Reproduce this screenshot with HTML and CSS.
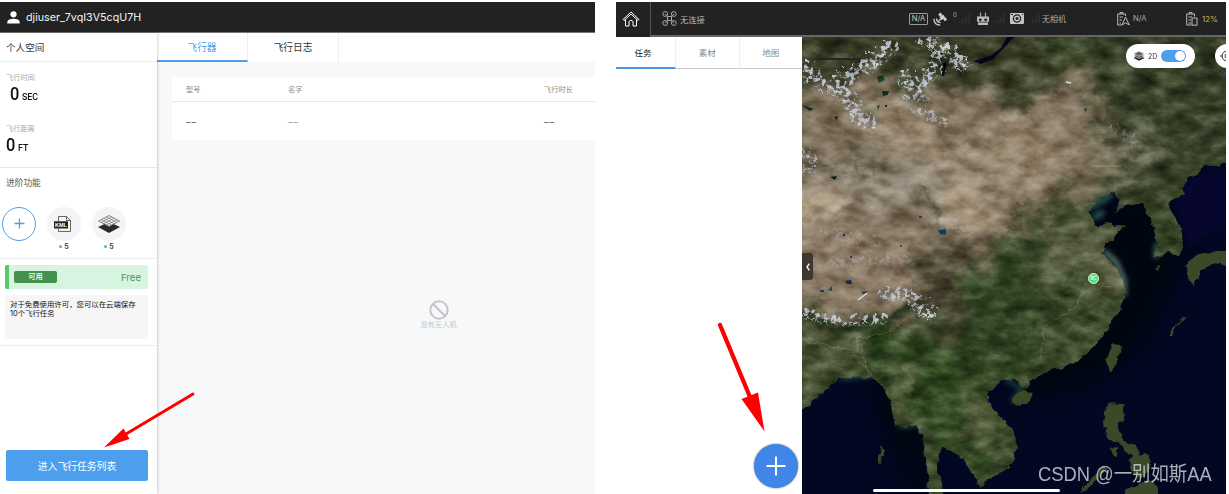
FILE: index.html
```html
<!DOCTYPE html>
<html lang="zh">
<head>
  <meta charset="utf-8">
  <title>Ground Station</title>
  <link rel="stylesheet" href="styles.css">
</head>
<body>
<div class="screens">

  <!-- user page -->
  <div class="screen user">
    <div class="userbar">
      <svg width="13" height="13" viewBox="0 0 13 13"><circle cx="6.5" cy="3.3" r="3.1" fill="#fff"/><path d="M.3 12.5V10.800Q1 7.700 6.500 7.700T12.700 10.800V12.500Z" fill="#fff"/></svg>
      <span class="username">djiuser_7vqI3V5cqU7H</span>
    </div>
    <div class="userbody">
      <div class="side">
        <div class="sidetitle">个人空间</div>
        <div class="stats">
          <div class="label">飞行时间</div>
          <div class="value indent"><b>0</b><i>SEC</i></div>
          <div class="label second">飞行距离</div>
          <div class="value"><b>0</b><i>FT</i></div>
        </div>
        <div class="features">
          <div class="ftitle">进阶功能</div>
          <div class="icons">
            <div class="feature">
              <div class="round add"><svg width="11" height="11" viewBox="0 0 11 11"><path d="M5.500 .5V10.500M.5 5.500H10.500" stroke="#4d9fee" stroke-width="1.300"/></svg></div>
            </div>
            <div class="feature">
              <div class="round">
                <svg class="kmlicon" width="18" height="18" viewBox="0 0 18 18"><path d="M4.500 6V1.500H12.500L16.500 5.500V16.500H4.500V13.500M12.500 1.500V5.500H16.500" fill="none" stroke="#444" stroke-width=".8"/><rect x="0" y="6.300" width="14" height="7.200" fill="#222"/><text x="1" y="12" class="kml" textLength="12" lengthAdjust="spacingAndGlyphs">KML</text></svg>
              </div>
              <div class="count"><span class="dot"></span>5</div>
            </div>
            <div class="feature">
              <div class="round">
                <svg width="24" height="20" viewBox="0 0 24 20"><path d="M1 13L12 8L23 13L12 19Z" fill="#2b2b2b"/><path d="M1.500 7L12 1.500L22.500 7L12 12.500Z" fill="#f5f5f5" stroke="#555" stroke-width=".7"/><path d="M4.100 8.400L14.600 2.900M6.700 9.700L17.200 4.200M9.400 11.100L19.900 5.600M4.100 5.600L14.600 11.100M6.700 4.200L17.200 9.700M9.400 2.900L19.900 8.400" stroke="#666" stroke-width=".6"/></svg>
              </div>
              <div class="count"><span class="dot"></span>5</div>
            </div>
          </div>
        </div>
        <div class="license">
          <div class="plan"><span class="tag">可用</span><span class="free">Free</span></div>
          <div class="note">对于免费使用许可，您可以在云端保存10个飞行任务</div>
        </div>
        <button class="enter" type="button">进入飞行任务列表</button>
      </div>
      <div class="main">
        <div class="tabs"><div class="tab on">飞行器</div><div class="tab">飞行日志</div></div>
        <div class="table">
          <div class="row head"><span>型号</span><span>名字</span><span>飞行时长</span></div>
          <div class="row"><span class="none">––</span><span class="none dim">––</span><span class="none">––</span></div>
        </div>
        <div class="empty">
          <svg width="20" height="20" viewBox="0 0 20 20"><circle cx="10" cy="10" r="8.700" fill="none" stroke="#c4c5c7" stroke-width="2"/><path d="M4 4L16 16" stroke="#c4c5c7" stroke-width="2"/></svg>
          <span>没有无人机</span>
        </div>
      </div>
    </div>
  </div>

  <!-- mission page -->
  <div class="screen mission">
    <div class="bar">
      <div class="home"><svg width="18" height="16" viewBox="0 0 18 16"><path d="M1 8.500L9 1L17 8.500L16 9.500L9 3.100L2 9.500ZM3.500 8.500V15H7V10.500Q9 8 11 10.500V15H14.500V8.500" fill="none" stroke="#fff" stroke-width="1"/></svg></div>
      <div class="status">
        <svg class="drone" width="15" height="15" viewBox="0 0 15 15" fill="none" stroke="#aaa"><circle cx="3.200" cy="3" r="2.400"/><circle cx="11.800" cy="3" r="2.400"/><circle cx="3.200" cy="12" r="2.400"/><circle cx="11.800" cy="12" r="2.400"/><path d="M3.200 3L5.500 5.500H9.500L11.800 3M3.200 12L5.500 9.500H9.500L11.800 12M5.500 5.500V9.500M9.500 5.500V9.500"/></svg>
        <span class="link">无连接</span>
        <span class="mode">N/A</span>
        <!-- satellite with its dish waves -->
        <svg class="sat" width="14" height="14" viewBox="0 0 14 14"><path d="M5.200 2.300L7.700 .6L9.300 3L6.900 4.700ZM10.200 7L12.500 5.200L14 7.700L11.700 9.300Z" fill="#d0d0d0"/><path d="M6.500 5.200L10 2.600L12.200 5.600L8.700 8.200Z" fill="#d0d0d0"/><path d="M5.600 8.800L7.600 7M3.600 6.500Q3.400 10.300 7.600 10.600M1 6.800Q.8 13 7.300 13.100" stroke="#d0d0d0" stroke-width="1.300" fill="none"/></svg>
        <span class="sats">0</span>
        <svg class="sig" width="11" height="9" viewBox="0 0 11 9"><path d="M1 9V7M4 9V5M7 9V3M10 9V0" stroke="#363636"/></svg>
        <svg class="rc" width="12" height="14" viewBox="0 0 12 14"><path d="M3.500 5V.5M8.500 5V.5" stroke="#aaa" stroke-width="1.200"/><path d="M0 4.500H12V9.800H0ZM1 10.500H11V13H1Z" fill="#bbb"/><circle cx="3.300" cy="7.800" r="1.400" fill="#222"/><circle cx="8.700" cy="7.800" r="1.400" fill="#222"/></svg>
        <svg class="sig s2" width="11" height="9" viewBox="0 0 11 9"><path d="M1 9V7M4 9V5M7 9V3M10 9V0" stroke="#363636"/></svg>
        <svg class="cam" width="14" height="11" viewBox="0 0 14 11"><rect width="14" height="11" rx="1" fill="#c4c4c4"/><circle cx="7" cy="5.500" r="3.600" fill="none" stroke="#222" stroke-width="1.300"/><circle cx="7" cy="5.500" r="1.500" fill="#222"/><path d="M1 1.500H3M12 1.500H13" stroke="#222"/></svg>
        <svg class="sig s3" width="11" height="9" viewBox="0 0 11 9"><path d="M1 9V7M4 9V5M7 9V3M10 9V0" stroke="#363636"/></svg>
        <span class="nocam">无相机</span>
        <svg class="bat" width="13" height="14" viewBox="0 0 13 14" fill="none" stroke="#bbb"><path d="M5 13H.7V2H8.500V4M3 2V.6H6V2M2.500 5H6M2.500 8H5M2.500 11H4"/><path d="M8.500 5L12.300 13L8.500 10.800L5 13Z"/></svg>
        <span class="na">N/A</span>
        <svg class="bat b2" width="12" height="14" viewBox="0 0 12 14" fill="none" stroke="#bbb"><path d="M5.500 13H.7V2H8.500V4.500M3 2V.6H6V2M2.500 5H6M2.500 8H5M2.500 11H5M6 6H11V13.200H6Z"/></svg>
        <span class="pct">12%</span>
      </div>
    </div>
    <div class="missionbody">
      <div class="list">
        <div class="ltabs"><div class="ltab on">任务</div><div class="ltab">素材</div><div class="ltab">地图</div></div>
        <button class="plus" type="button"><svg width="20" height="20" viewBox="0 0 20 20"><path d="M10 .5V19.500M.5 10H19.500" stroke="#fff" stroke-width="2"/></svg></button>
      </div>
      <div class="map">
        <svg class="earth" width="424" height="457" viewBox="802 37 424 457" color-interpolation-filters="sRGB">
          <defs>
            <clipPath id="land"><path d="M802 30H1230V163L1216 166L1203 165L1197 174L1187 180L1183 193L1167 203L1175 217L1182 233L1183 247L1178 256L1168 252L1153 258L1157 243L1153 227L1148 213L1145 203L1130 203L1115 212L1120 200L1113 190L1103 198L1088 211L1098 227L1107 223L1125 227L1113 238L1100 252L1113 263L1123 280L1125 293L1120 308L1107 330L1093 347L1077 362L1053 370L1030 380L1029 389L1023 388L1015 378L1000 382L988 393V402L1000 417L1012 430L1017 447L1013 463L997 475L980 487L975 477L963 460L950 450L943 447L938 453L937 470L942 483L943 498H928L927 467L923 440L917 425L895 427L890 400L880 385L872 377L840 378L820 395L798 414V30Z"/></clipPath>
            <filter id="soft" x="-50%" y="-50%" width="200%" height="200%"><feGaussianBlur stdDeviation="10"/></filter>
            <filter id="soft2" x="-50%" y="-50%" width="200%" height="200%"><feGaussianBlur stdDeviation="2.500"/></filter>
            <filter id="rough" filterUnits="userSpaceOnUse" x="790" y="25" width="450" height="480"><feTurbulence type="fractalNoise" baseFrequency=".12" numOctaves="4" seed="3"/><feDisplacementMap in="SourceGraphic" scale="7" xChannelSelector="R" yChannelSelector="G"/></filter>
            <filter id="warp" filterUnits="userSpaceOnUse" x="760" y="0" width="500" height="530"><feTurbulence type="fractalNoise" baseFrequency=".03" numOctaves="5" seed="12"/><feDisplacementMap in="SourceGraphic" scale="60" xChannelSelector="R" yChannelSelector="G"/></filter>
            <filter id="grain" x="0" y="0" width="100%" height="100%"><feTurbulence type="fractalNoise" baseFrequency=".045 .08" numOctaves="6" seed="21"/><feColorMatrix values=".95 0 0 0 .03  .95 0 0 0 .03  .95 0 0 0 .03  0 0 0 0 1"/></filter>
            <filter id="snow" filterUnits="userSpaceOnUse" x="790" y="25" width="450" height="480"><feTurbulence type="fractalNoise" baseFrequency=".22" numOctaves="4" seed="5" result="n"/><feColorMatrix in="n" values="0 0 0 0 1  0 0 0 0 1  0 0 0 0 1  0 6 0 0 -2.700" result="m"/><feDisplacementMap in="SourceGraphic" in2="n" scale="20" xChannelSelector="R" yChannelSelector="G" result="d"/><feComposite in="d" in2="m" operator="in"/></filter>
          </defs>
          <rect x="802" y="37" width="424" height="457" fill="#020722"/>
          <g filter="url(#soft)" fill="#000610">
            <path d="M1090 205L1150 195L1190 250L1165 300L1140 350L1090 385L1020 400L1000 390L1110 320Z"/>
            <path d="M865 378L885 375L930 430V494H915L890 440Z"/>
          </g>
          <path d="M1187 180L1226 165V225L1190 245L1175 205Z" fill="#07072e" filter="url(#soft2)"/>
          <g filter="url(#soft2)" fill="none" stroke="#23534f" stroke-width="6">
            <path d="M1088 208L1105 199L1112 193M1093 218L1104 212M1155 258L1158 242"/>
            <path d="M1104 251L1116 262L1124 280V296" stroke="#52776a" stroke-width="5"/>
            <path d="M840 379L872 376M898 427L917 425M1005 380L1022 388L1011 402M938 480V494" stroke-width="3"/>
          </g>
          <g filter="url(#rough)">
            <g clip-path="url(#land)">
              <rect x="798" y="30" width="435" height="470" fill="#3b4729"/>
              <g filter="url(#warp)">
              <g filter="url(#soft)">
                <path d="M770 100L850 70L930 85L1000 85L1060 65L1110 90L1120 150L1080 185L1020 235L975 270L960 310L920 325L770 310Z" fill="#7a6d58"/>
                <path d="M850 105L920 100L960 140L1070 110L1070 165L1010 190L930 175L850 130Z" fill="#93836c"/>
                <path d="M770 180L870 165L970 170L1010 210L960 225L900 200L770 230Z" fill="#94897a"/>
                <path d="M770 190L860 190L840 220L770 240Z" fill="#b5a68d"/>
                <path d="M940 185L970 188L990 215L978 228Z" fill="#b09a7b"/>
                <path d="M770 240L880 220L930 250L950 290L925 310L850 312L770 300Z" fill="#8a7964"/>
                <path d="M770 10H870L1060 10L1040 70L970 90L910 72L830 85L770 80Z" fill="#373b24"/>
                <path d="M1060 10H1250V160L1190 190L1130 200L1110 150L1105 80Z" fill="#363f27"/>
                <path d="M985 105L1045 75L1060 80L1020 108Z" fill="#2b341c"/>
                <path d="M1110 155L1140 120L1155 140L1120 180L1090 190Z" fill="#7f7a64"/>
                <path d="M975 260L1040 240L1080 260L1110 280L1115 305L1050 365L1000 385L945 360L950 290Z" fill="#304322"/>
                <path d="M1025 235L1090 220L1135 260L1135 295L1070 295L1040 265Z" fill="#5b6043"/>
                <path d="M1035 330L1080 310L1090 350L1040 375Z" fill="#3f4e2d"/>
                <path d="M925 250L960 260L960 340L930 330L910 295Z" fill="#474230"/>
                <path d="M770 315L850 325L870 370L830 378L770 415Z" fill="#4b5536"/>
                <path d="M870 320L960 350L1000 410L980 480L935 450L920 425L890 410L865 360Z" fill="#2b451e"/>
                <path d="M945 400L990 400L993 435L955 445Z" fill="#5f6544"/>
                <path d="M893 360L910 362L908 420L896 420Z" fill="#827f60"/>
              </g>
              <g filter="url(#soft2)" fill="none">
                <path d="M790 152L835 163L885 168M920 200L960 225L980 255M790 78L850 88" stroke="#3d3a29" stroke-width="4" opacity=".6"/>
                <path d="M790 232L850 212L885 195L925 205" stroke="#6b5d47" stroke-width="3" opacity=".7"/>
                <path d="M1010 240L1030 210M1040 255L1060 200M1110 90L1090 155M1075 60L1010 90M980 300L1010 350M1060 290L1030 340M915 345L925 410" stroke="#263018" stroke-width="5" opacity=".5"/>
                <path d="M840 120L900 140L985 155M860 105L960 140M960 150L1030 120L1070 75M985 180L1070 150M1010 210L1040 190" stroke="#b09f87" stroke-width="2.500" opacity=".6"/>
              </g>
              </g>
              <path d="M798 317L840 329L880 326L912 305" stroke="#22331a" stroke-width="8" fill="none" filter="url(#soft2)"/>
              <path d="M872 375L850 350L802 340M858 352L857 337L885 334L905 320M1125 293L1090 280L1075 308L1045 325L1040 360M1013 170L985 200L990 230M860 345L870 380" fill="none" stroke="#918a6d" stroke-width="1" opacity=".5"/>
            </g>
            <g fill="#3a4a28">
              <path d="M1114 344L1120 345L1117 360L1111 373L1106 360Z"/>
              <path d="M1014 396L1024 390L1031 393L1028 402L1019 406L1012 402Z"/>
              <path d="M1108 403L1122 404L1125 415L1118 425L1122 440L1138 447L1140 460L1128 454L1117 442L1106 437L1104 422Z"/>
              <path d="M1110 446L1117 448L1117 457L1113 456ZM1128 458L1148 454L1151 464L1145 475L1138 480L1133 470ZM1125 488L1150 480L1158 490V498H1125Z"/>
              <path d="M1103 465L1107 469L1085 491L1080 493L1088 482Z"/>
              <path d="M1230 250L1198 255L1184 266L1190 280L1194 288L1202 270L1212 264L1230 266Z"/>
              <path d="M1187 315L1184 316L1169 334L1171 335ZM1154 267L1161 266L1157 269ZM882 445L884 449L880 466L878 463Z"/>
            </g>
          </g>
          <g filter="url(#snow)" fill="none" stroke="#b9bfca" stroke-linecap="round">
            <path d="M806 72L815 80M825 88L845 92L852 112L868 126M838 83L870 65L892 48M925 40L945 52L938 68L929 76M940 55L962 66M905 82L920 88" stroke-width="15"/>
            <path d="M908 98L928 99M920 113L945 124M804 155L815 162M802 170L808 172" stroke-width="9" opacity=".8"/>
            <path d="M800 314L840 323L882 321" stroke-width="9"/>
            <path d="M888 295L908 297L930 315" stroke-width="14"/>
            <path d="M820 235L880 244M830 265L910 262M940 220L960 230M1118 132L1135 145" stroke-width="9" opacity=".3"/>
          </g>
          <g fill="#04081f">
            <path d="M1007 37L1001 48L990 56L973 61L981 64L993 59L1004 48L1014 37ZM943 63L947 62L944 76L942 76Z"/>
            <path d="M877 77L883 75L885 80L879 83ZM882 91L889 91L888 95L883 96ZM877 106L880 105L878 110ZM885 105H887V107H885ZM834 117L838 116L837 121ZM802 105L814 109L810 111ZM830 177L837 176L835 180ZM1084 109L1087 108L1086 112Z" fill="#123529"/>
            <path d="M938 230L946 229L946 235L940 234ZM845 281L851 280L852 284L847 284ZM861 292L868 291L864 295ZM919 216H922V218H919ZM820 290H824V292H820ZM828 290L832 286V291ZM843 234H845V236H843ZM900 245H902V247H900ZM850 256H852V258H850Z" fill="#123e68"/>
            <path d="M1081 99L1087 92L1086 97L1082 100Z" fill="#6d8977"/>
          </g>
          <path d="M858 300L867 293M1066 82L1071 83" stroke="#dadad5" stroke-width="1.500"/>
          <path d="M1092 166L1121 166" stroke="#a89c85" opacity=".7"/>
          <g clip-path="url(#land)" class="texture"><rect x="802" y="37" width="424" height="457" filter="url(#grain)"/></g>
        </svg>
        <div class="scale">0</div>
        <div class="switch">
          <svg width="12" height="10" viewBox="0 0 12 10"><path d="M6 4.500L11.500 7L6 9.700L.5 7Z" fill="#222"/><path d="M6 2.300L11.500 4.900L6 7.500L.5 4.900Z" fill="#555" stroke="#fff" stroke-width=".5"/><path d="M6 .2L11.500 2.800L6 5.400L.5 2.800Z" fill="#666" stroke="#fff" stroke-width=".5"/></svg>
          <span>2D</span><div class="toggle"></div>
        </div>
        <div class="locate"><svg width="14" height="14" viewBox="0 0 14 14" fill="none" stroke="#333"><circle cx="7" cy="7" r="5"/><circle cx="7" cy="7" r="2"/><path d="M7 0V3M7 11V14M0 7H3M11 7H14"/></svg></div>
        <div class="fold"><svg width="4" height="8" viewBox="0 0 4 8"><path d="M3.300 .7L1 4L3.300 7.300" fill="none" stroke="#fff" stroke-width="1.400"/></svg></div>
        <div class="pin">RC</div>
        <div class="watermark">CSDN @一别如斯AA</div>
      </div>
    </div>
    <div class="homeline"></div>
  </div>
</div>

<svg class="arrows" width="1229" height="494" viewBox="0 0 1229 494">
  <path d="M193 394L126 434" stroke="#f00" stroke-width="3" stroke-linecap="round"/>
  <path d="M720 325L750 397" stroke="#f00" stroke-width="4.300" stroke-linecap="round"/>
  <path d="M104 447.500L123.500 428.500L129.500 439ZM764.500 431.500L741.500 399L758 392.500Z" fill="#f00"/>
</svg>
</body>
</html>
```
FILE: styles.css
```css
* { box-sizing: border-box; }
body {
  margin: 0;
  width: 1229px;
  height: 494px;
  overflow: hidden;
  position: relative;
  background: #fff;
  font-family: Inter, "Noto Sans CJK SC", sans-serif;
  color: #333;
}
svg { display: block; flex: none; }
button { border: none; padding: 0; cursor: pointer; font-family: inherit; }
.screens { display: flex; gap: 21px; padding-top: 2px; height: 494px; }
.screen { display: flex; flex-direction: column; overflow: hidden; position: relative; }
.user { width: 595px; }
.mission { width: 610px; }

/* user page */
.userbar {
  height: 31px;
  flex: none;
  display: flex;
  align-items: center;
  gap: 6px;
  padding-left: 7px;
  background: #222;
  border-bottom: 1px solid #777;
}
.username { color: #f4f4f4; font-size: 10.7px; white-space: nowrap; }
.userbody { flex: 1; display: flex; min-height: 0; }
.side {
  width: 157px;
  flex: none;
  display: flex;
  flex-direction: column;
  position: relative;
  background: #fff;
  box-shadow: 0 0 3px rgba(0,0,0,.3);
}
.sidetitle { height: 29px; line-height: 29px; padding-left: 6px; font-size: 9.600px; border-bottom: 1px solid #eee; }
.stats { height: 106px; padding: 9px 0 0 6px; border-bottom: 1px solid #e6e6e6; }
.label { height: 13px; line-height: 13px; font-size: 7.2px; color: #aaa; }
.second { margin-top: 16px; }
.value { height: 22px; display: flex; align-items: baseline; gap: 2px; color: #111; font-family: Roboto, sans-serif; }
.value b { font-size: 19px; line-height: 20px; font-weight: 500; width: 9.500px; transform: scaleX(.86); transform-origin: left; }
.value i { font-size: 9.8px; font-style: normal; font-weight: 500; transform: scaleX(.9); transform-origin: left; }
.indent { padding-left: 4px; }
.features { height: 91px; border-bottom: 1px solid #eee; padding-top: 7px; }
.ftitle { height: 16px; line-height: 16px; padding-left: 6px; font-size: 8.700px; color: #555; }
.icons { display: flex; gap: 11px; padding: 15.500px 0 0 2px; }
.feature { width: 34px; }
.round { width: 34px; height: 34px; border-radius: 50%; background: #f4f4f4; display: flex; align-items: center; justify-content: center; }
.add { background: #fff; border: 1.5px solid #4d9fee; }
.kmlicon { margin-right: 3px; }
.kml { font: bold 6px "Liberation Sans", sans-serif; fill: #fff; }
.count { display: flex; align-items: center; justify-content: center; gap: 2px; font-size: 7px; font-weight: 600; line-height: 12px; }
.dot { width: 3px; height: 3px; border-radius: 50%; background: #4fc96b; }
.license { height: 87px; padding: 6px 9px 6px 5px; border-bottom: 1px solid #eee; }
.plan {
  height: 24px;
  display: flex;
  align-items: center;
  justify-content: space-between;
  padding: 0 7px 0 5px;
  border-left: 4px solid #54c96b;
  border-radius: 2px;
  background: #d7f4e1;
}
.tag { width: 43px; height: 12px; line-height: 12px; border-radius: 2px; background: #43914f; color: #fff; font-size: 7.3px; font-weight: 500; text-align: center; }
.free { color: #459657; font-size: 9.600px; }
.note { height: 44px; margin-top: 6px; padding: 5px 5px; border-radius: 2px; background: #f6f6f6; font-size: 7.4px; line-height: 9px; color: #111; }
.enter { margin: auto 9px 13px 6px; height: 31px; border-radius: 2px; background: #4d9fee; color: #fff; font-size: 9.8px; }
.main { flex: 1; background: #f6f8fa; min-width: 0; }
.tabs { display: flex; height: 29px; background: #fff; }
.tab { width: 91px; height: 29px; line-height: 29px; text-align: center; font-size: 9.700px; border-right: 1px solid #eee; }
.tab.on { color: #4d9fee; border-bottom: 2px solid #4d9fee; }
.table { margin: 15px 0 0 15px; }
.row { display: grid; grid-template-columns: 102px 256px 1fr; align-items: center; height: 38px; padding-left: 14px; background: #fff; font-size: 9px; color: #555; }
.head { height: 25px; border-bottom: 1px solid #e5e6e8; font-size: 7.2px; color: #888; }
.none { letter-spacing: 1px; }
.dim { color: #999; }
.empty { margin-top: 160px; padding-left: 125px; display: flex; flex-direction: column; align-items: center; font-size: 7.3px; line-height: 10px; color: #c5c6c8; }

/* mission page */
.bar { height: 35px; flex: none; display: flex; background: #222; }
.home { width: 35px; height: 35px; padding: 9px 0 0 6px; border-right: 1px solid #555; }
.status { flex: 1; display: flex; align-items: center; border-bottom: 2px solid #666; color: #aaa; font-size: 8px; white-space: nowrap; }
.status > * { flex: none; }
.drone { margin-left: 11px; }
.link { width: 232px; padding-left: 3px; font-size: 8.300px; color: #b8b8b8; }
.mode { width: 19px; height: 12px; line-height: 10px; border: 1px solid #999; border-radius: 1px; font-size: 7.500px; text-align: center; color: #ccc; }
.sat { margin-left: 5px; }
.sats { width: 6px; margin: 0 0 8px 6px; font-size: 6px; }
.rc { margin-left: 7px; }
.s2, .s3 { margin-left: 5px; }
.cam { margin-left: 5px; }
.nocam { width: 72px; margin-left: 2px; font-size: 8px; }
.bat { margin-left: 3px; }
.na { width: 46px; margin-left: 3px; font-size: 7.7px; }
.b2 { margin-left: 7px; }
.pct { margin-left: 4px; font-size: 7.800px; color: #d6b23d; }
.missionbody { flex: 1; display: flex; min-height: 0; }
.list { width: 186px; display: flex; flex-direction: column; }
.ltabs { display: flex; height: 32px; flex: none; border-bottom: 1px solid #ccc; }
.ltab { flex: 1; height: 32px; line-height: 32px; text-align: center; font-size: 8.500px; color: #888; border-right: 1px solid #eee; }
.ltab:last-child { border-right: none; }
.ltab.on { flex: 0 0 60px; padding-right: 5px; color: #222; border-bottom: 2px solid #4a98e6; }
.plus { width: 44px; height: 44px; margin: auto 4px 6px auto; border-radius: 50%; background: #4086e8; box-shadow: 0 0 2px rgba(0,0,0,.6); display: flex; align-items: center; justify-content: center; }
.map { width: 424px; position: relative; overflow: hidden; background: #020722; }
.texture { mix-blend-mode: soft-light; }
.scale { position: absolute; left: 14px; top: 12px; width: 78px; height: 11px; padding-left: 3px; font-size: 7px; line-height: 9px; color: #222; border-bottom: 2px solid rgba(34,34,34,.4); }
.scale::after { content: ""; position: absolute; left: 0; bottom: -2px; width: 39px; height: 2px; background: #222; }
.switch { position: absolute; left: 324px; top: 7px; width: 69px; height: 24px; border-radius: 12px; background: #fff; display: flex; align-items: center; padding-left: 7px; gap: 3px; font-size: 7px; }
.toggle { width: 25px; height: 12px; margin-left: 1px; border-radius: 6px; background: #4d9fee; position: relative; }
.toggle::after { content: ""; position: absolute; right: 1px; top: 1px; width: 10px; height: 10px; border-radius: 50%; background: #fff; }
.locate { position: absolute; left: 413px; top: 7px; width: 24px; height: 24px; border-radius: 50%; background: #fff; display: flex; align-items: center; justify-content: center; }
.fold { position: absolute; left: 0; top: 216px; width: 11px; height: 27px; border-radius: 0 3px 3px 0; background: rgba(50,45,42,.85); display: flex; align-items: center; justify-content: center; }
.pin { position: absolute; left: 286px; top: 236px; width: 11px; height: 11px; line-height: 9px; border: 1px solid #d6f7df; border-radius: 50%; background: #4fe17e; color: #fff; font-size: 4.500px; text-align: center; }
.watermark { position: absolute; left: 236px; top: 423px; line-height: 28px; font-family: "Liberation Sans", "Noto Sans CJK SC", sans-serif; font-size: 20px; color: rgba(215,217,222,.8); white-space: nowrap; transform: scaleX(.918); transform-origin: left; }
.homeline { position: absolute; left: 257px; bottom: 2px; width: 187px; height: 3px; border-radius: 2px; background: #fff; }
.arrows { position: absolute; left: 0; top: 0; pointer-events: none; }
```
